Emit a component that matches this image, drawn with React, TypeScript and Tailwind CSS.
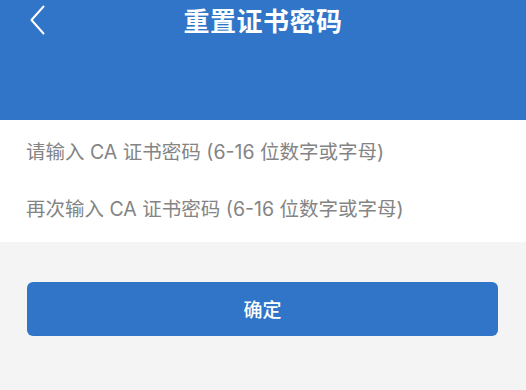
export default function App() {
  const font = { fontFamily: '"Noto Sans CJK SC", "Noto Sans", sans-serif' };
  const inputFont = { fontFamily: 'Inter, "Noto Sans CJK SC", sans-serif' };
  return (
    <div className="w-[526px] h-[390px] bg-[#f4f4f4] flex flex-col overflow-hidden" style={font}>
      <header className="h-[120px] bg-[#3075c8] relative">
        <div className="h-[40px] flex items-center justify-center">
          <h1 className="text-[26px] leading-none font-bold text-white tracking-[0.5px]">重置证书密码</h1>
        </div>
        <button className="absolute left-[28px] top-[5px] w-[18px] h-[30px] flex items-center justify-center">
          <svg width="16" height="30" viewBox="0 0 16 30" fill="none">
            <path d="M14.5 1.5 L2.5 15 L14.5 28.5" stroke="white" strokeWidth="2" strokeLinecap="round" strokeLinejoin="round" />
          </svg>
        </button>
      </header>

      <section className="bg-white flex flex-col" style={inputFont}>
        <div className="h-[62px] flex items-center px-[26px] pt-[4px]">
          <span className="text-[19.5px] text-[#848484]">请输入 CA 证书密码 (6-16 位数字或字母)</span>
        </div>
        <div className="h-[60px] flex items-center px-[26px] pb-[4px]">
          <span className="text-[19.5px] text-[#848484]">再次输入 CA 证书密码 (6-16 位数字或字母)</span>
        </div>
      </section>

      <div className="px-[27px] pt-[40px]">
        <button className="w-[471px] h-[54px] rounded-[6px] bg-[#3075c8] text-white text-[19px] font-medium flex items-center justify-center">
          确定
        </button>
      </div>
    </div>
  );
}
